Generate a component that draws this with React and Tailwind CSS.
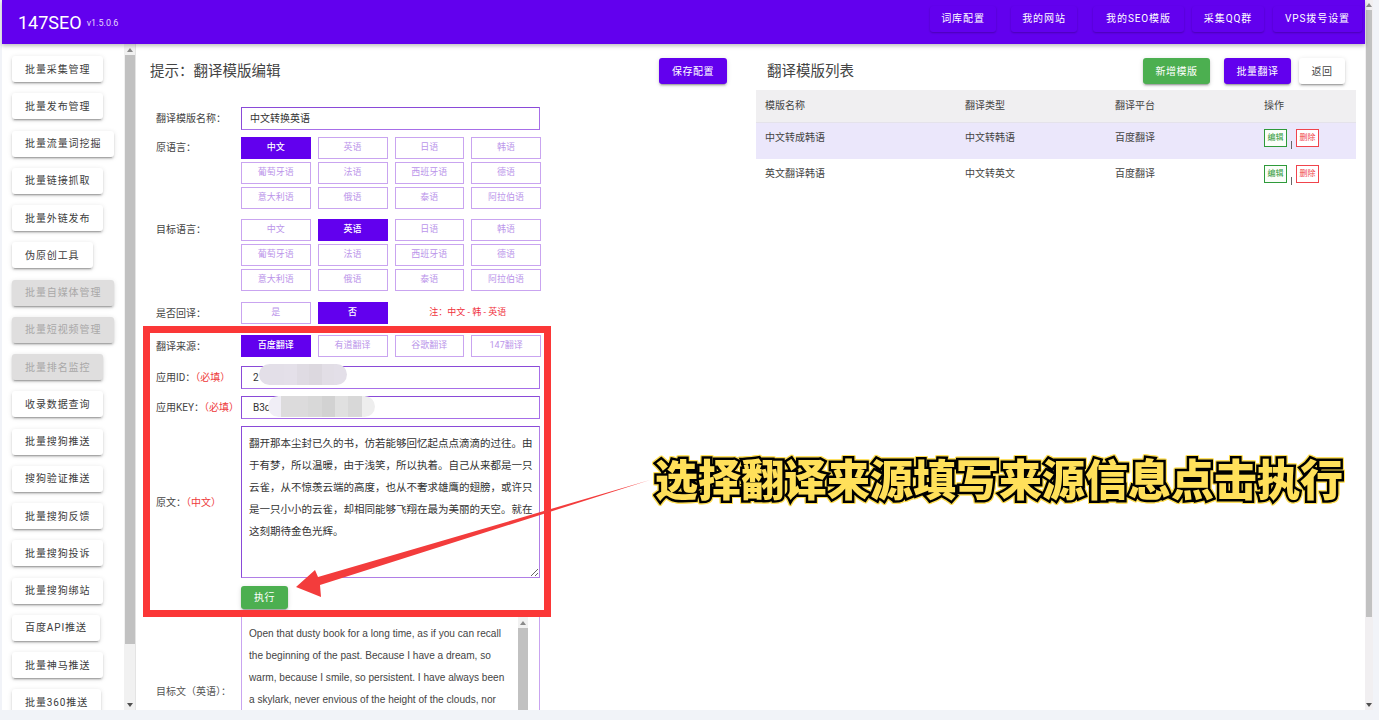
const font = `font-['Roboto','Noto_Sans_CJK_SC',sans-serif]`;

const raised =
  "shadow-[0_3px_1px_-2px_rgba(0,0,0,0.2),0_2px_2px_0_rgba(0,0,0,0.14),0_1px_5px_0_rgba(0,0,0,0.12)]";

const menu = [
  ["批量采集管理"],
  ["批量发布管理"],
  ["批量流量词挖掘"],
  ["批量链接抓取"],
  ["批量外链发布"],
  ["伪原创工具"],
  ["批量自媒体管理", true],
  ["批量短视频管理", true],
  ["批量排名监控", true],
  ["收录数据查询"],
  ["批量搜狗推送"],
  ["搜狗验证推送"],
  ["批量搜狗反馈"],
  ["批量搜狗投诉"],
  ["批量搜狗绑站"],
  ["百度API推送"],
  ["批量神马推送"],
  ["批量360推送"],
];

const nav = [
  { label: "词库配置", width: "w-[66px]", gap: "mr-[15px]" },
  { label: "我的网站", width: "w-[66px]", gap: "mr-[16px]" },
  { label: "我的SEO模版", width: "w-[91px]", gap: "mr-[8px]" },
  { label: "采集QQ群", width: "w-[72px]", gap: "mr-[9px]" },
  { label: "VPS拨号设置", width: "w-[89px]", gap: "" },
];

const languages = [
  "中文", "英语", "日语", "韩语",
  "葡萄牙语", "法语", "西班牙语", "德语",
  "意大利语", "俄语", "泰语", "阿拉伯语",
];

const sources = ["百度翻译", "有道翻译", "谷歌翻译", "147翻译"];

const templates = [
  { name: "中文转成韩语", type: "中文转韩语", platform: "百度翻译", active: true },
  { name: "英文翻译韩语", type: "中文转英文", platform: "百度翻译" },
];

const sourceText =
  "翻开那本尘封已久的书，仿若能够回忆起点点滴滴的过往。由于有梦，所以温暖，由于浅笑，所以执着。自己从来都是一只云雀，从不惊羡云端的高度，也从不奢求雄鹰的翅膀，或许只是一只小小的云雀，却相同能够飞翔在最为美丽的天空。就在这刻期待金色光辉。";

const targetText =
  "Open that dusty book for a long time, as if you can recall the beginning of the past. Because I have a dream, so warm, because I smile, so persistent. I have always been a skylark, never envious of the height of the clouds, nor";

const Option = ({ label, active }) => (
  <button
    className={
      active
        ? "h-[22px] bg-[#6200ee] text-white text-[9px] font-medium"
        : "h-[22px] bg-white border border-[#c9a4f0] text-[#bb95ea] text-[9px]"
    }
  >
    {label}
  </button>
);

const Label = ({ children, className = "" }) => (
  <div className={`w-[85px] shrink-0 text-[10px] text-[#444] whitespace-nowrap ${className}`}>
    {children}
  </div>
);

const TextInput = ({ value, inset = "px-[8px]" }) => (
  <div className={`w-[299px] h-[23px] flex items-center ${inset} text-[10px] text-[#333] bg-white border border-[#a76ee8] border-t-[#8a4ad8] border-l-[#8a4ad8]`}>
    {value}
  </div>
);

const Arrow = ({ up, className = "" }) => (
  <div
    className={`w-0 h-0 border-x-[3px] border-x-transparent ${
      up ? "border-b-[4px] border-b-[#8a8a8a]" : "border-t-[4px] border-t-[#505050]"
    } ${className}`}
  />
);

const Sidebar = () => (
  <aside className="w-[134px] shrink-0 flex h-full">
    <div className="w-[122px] shrink-0 overflow-hidden pt-[12px] pl-[10px] flex flex-col items-start gap-[11.25px]">
      {menu.map(([label, disabled]) => (
        <button
          key={label}
          className={`h-[26px] shrink-0 px-[13px] rounded-[3px] text-[10px] tracking-[0.9px] whitespace-nowrap ${raised} ${
            disabled ? "bg-[#dfdede] text-[#a9a8a8]" : "bg-white text-[#3c3c3c]"
          }`}
        >
          {label}
        </button>
      ))}
    </div>
    <div className="w-[12px] shrink-0 bg-[#f1f1f1] flex flex-col items-center border-r border-[#e4e4e4]">
      <Arrow up className="mt-[4px]" />
      <div className="w-[10px] h-[589px] mt-[3px] bg-[#c1c1c1]" />
      <Arrow className="mt-auto mb-[3px]" />
    </div>
  </aside>
);

const FormPanel = () => (
  <section className="w-[620px] shrink-0 h-full overflow-hidden pt-[14px]">
    <div className="flex items-center justify-between pl-[14px] pr-[29px] h-[26px]">
      <h2 className="pt-[1px] text-[14.5px] text-[#444] font-normal">提示：翻译模版编辑</h2>
      <button className={`w-[68px] h-[26px] rounded-[3px] bg-[#6200ee] text-white text-[10px] tracking-[0.5px] ${raised}`}>
        保存配置
      </button>
    </div>

    <div className="pl-[20px] mt-[23px]">
      <div className="flex items-center">
        <Label>翻译模版名称：</Label>
        <TextInput value="中文转换英语" />
      </div>

      <div className="flex mt-[7px]">
        <Label className="pt-[3px]">原语言：</Label>
        <div className="w-[300px] grid grid-cols-4 gap-x-[7px] gap-y-[3px]">
          {languages.map((item) => (
            <Option key={item} label={item} active={item === "中文"} />
          ))}
        </div>
      </div>

      <div className="flex mt-[10px]">
        <Label className="pt-[3px]">目标语言：</Label>
        <div className="w-[300px] grid grid-cols-4 gap-x-[7px] gap-y-[3px]">
          {languages.map((item) => (
            <Option key={item} label={item} active={item === "英语"} />
          ))}
        </div>
      </div>

      <div className="flex items-center mt-[11px]">
        <Label>是否回译：</Label>
        <div className="w-[300px] grid grid-cols-4 gap-x-[7px] items-center">
          <Option label="是" />
          <Option label="否" active />
          <div className="col-span-2 text-center text-[9px] text-[#f0323c] whitespace-nowrap">注：中文 - 韩 - 英语</div>
        </div>
      </div>

      <div className="flex items-center mt-[11px]">
        <Label>翻译来源：</Label>
        <div className="w-[300px] grid grid-cols-4 gap-x-[7px]">
          {sources.map((item, i) => (
            <Option key={item} label={item} active={i === 0} />
          ))}
        </div>
      </div>

      <div className="flex items-center mt-[9px]">
        <Label>
          应用ID：<span className="text-[#ee3a3a]">（必填）</span>
        </Label>
        <TextInput value="2" inset="px-[11px]" />
      </div>

      <div className="flex items-center mt-[7px]">
        <Label>
          应用KEY：<span className="text-[#ee3a3a]">（必填）</span>
        </Label>
        <TextInput value="B3c" inset="px-[11px]" />
      </div>

      <div className="flex items-center mt-[7px]">
        <Label>
          原文：<span className="text-[#ee3a3a]">（中文）</span>
        </Label>
        <textarea
          readOnly
          defaultValue={sourceText}
          className="block w-[299px] h-[152px] pl-[7px] pr-[4px] py-[6px] text-[10.5px] leading-[22px] text-[#333] bg-white border border-[#b07ee6] border-t-[#8a4ad8] border-l-[#8a4ad8] outline-none"
        />
      </div>

      <button className={`block ml-[85px] mt-[8px] w-[47px] h-[23px] rounded-[3px] bg-[#4caf50] text-white text-[10px] tracking-[0.5px] ${raised}`}>
        执行
      </button>

      <div className="flex items-center mt-[7px]">
        <Label className="text-[#555] -mt-[1px]">目标文（英语）：</Label>
        <div className="w-[299px] h-[152px] flex border border-[#c9a4f0] bg-white">
          <div className="flex-1 overflow-hidden px-[7px] py-[6px] font-['Liberation_Sans',sans-serif] text-[10.1px] leading-[22px] text-[#444]">
            {targetText}
          </div>
          <div className="w-[10px] mr-[11px] shrink-0 bg-[#f1f1f1] flex flex-col items-center">
            <Arrow up className="mt-[4px]" />
            <div className="w-full flex-1 mt-[3px] bg-[#c1c1c1]" />
          </div>
        </div>
      </div>
    </div>
  </section>
);

const ListPanel = () => (
  <section className="w-[600px] shrink-0 pt-[14px]">
    <div className="flex items-center h-[26px] pl-[11px]">
      <h2 className="pt-[1px] text-[14.5px] text-[#444] font-normal">翻译模版列表</h2>
      <button className={`ml-auto w-[67px] h-[26px] rounded-[3px] bg-[#4caf50] text-white text-[10px] tracking-[0.5px] ${raised}`}>
        新增模版
      </button>
      <button className={`ml-[14px] w-[67px] h-[26px] rounded-[3px] bg-[#6200ee] text-white text-[10px] tracking-[0.5px] ${raised}`}>
        批量翻译
      </button>
      <button className={`ml-[8px] mr-[11px] w-[46px] h-[26px] rounded-[3px] bg-white text-[#444] text-[10px] tracking-[0.5px] ${raised}`}>
        返回
      </button>
    </div>

    <table className="w-full mt-[6px] table-fixed text-[10px] text-[#444]">
      <thead>
        <tr className="h-[32px] bg-[#f0eff1] border-b border-[#e4e2ea] text-left">
          <th className="w-[200px] pl-[9px] font-normal">模版名称</th>
          <th className="w-[150px] pl-[9px] font-normal">翻译类型</th>
          <th className="w-[150px] pl-[9px] font-normal">翻译平台</th>
          <th className="pl-[8px] font-normal">操作</th>
        </tr>
      </thead>
      <tbody>
        {templates.map((row) => (
          <tr key={row.name} className={row.active ? "h-[37px] bg-[#ebe7fb]" : "h-[37px] bg-white"}>
            <td className="pl-[9px] align-top pt-[7px]">{row.name}</td>
            <td className="pl-[9px] align-top pt-[7px]">{row.type}</td>
            <td className="pl-[9px] align-top pt-[7px]">{row.platform}</td>
            <td className="pl-[8px] align-top pt-[6px]">
              <div className="flex items-end text-[8px]">
                <span className="w-[23px] h-[18px] flex items-center justify-center bg-[#fafdf9] border border-[#2e9a3a] text-[#2e9a3a]">
                  编辑
                </span>
                <span className="w-px h-[8px] mx-[4px] -mb-[2px] bg-[#666]" />
                <span className="w-[23px] h-[18px] flex items-center justify-center bg-white border border-[#f0444c] text-[#f0444c]">
                  删除
                </span>
              </div>
            </td>
          </tr>
        ))}
      </tbody>
    </table>
  </section>
);

const Mosaic = ({ className, cells }) => (
  <div className={`absolute flex h-[21px] rounded-full overflow-hidden ${className}`}>
    {cells.map((color, i) => (
      <div key={i} className="flex-1" style={{ backgroundColor: color }} />
    ))}
  </div>
);

const Annotations = () => (
  <>
    {/* 打码 */}
    <Mosaic
      className="left-[259px] top-[364px] w-[88px]"
      cells={["#e3dfe8", "#e3dfe8", "#e4e0e9", "#dfdbe3", "#dcd8df", "#e2dee6", "#e3dfe8"]}
    />
    <Mosaic
      className="left-[268px] top-[396px] w-[107px]"
      cells={["#f0eef6", "#dcdbdc", "#dcdbdc", "#d8d8d8", "#d2d2d2", "#e0e0e0", "#d8d8d8", "#eeeeee"]}
    />

    {/* 红框 */}
    <div className="absolute left-[143px] top-[326px] w-[408px] h-[291px] border-[7px] border-[#fb3737]" />

    <svg className="absolute left-0 top-0 pointer-events-none" width="1379" height="720">
      <polygon points="650,480 320,585 321,597 296,587 315,570 318,577 650,480" fill="#f33c3c" />
    </svg>

    <div className="absolute left-[655px] top-[451px] whitespace-nowrap text-[43px] leading-[60px] font-black text-[#ffe05a] [-webkit-text-stroke:5px_#000] [paint-order:stroke_fill] [filter:drop-shadow(1px_0_0_#ffdf55)_drop-shadow(-1px_0_0_#ffdf55)_drop-shadow(0_1px_0_#ffdf55)_drop-shadow(0_-1px_0_#ffdf55)]">
      选择翻译来源填写来源信息点击执行
    </div>
  </>
);

export default function App() {
  return (
    <div className={`relative h-[720px] overflow-hidden bg-[#f1f3f8] ${font}`}>
      <div className="flex h-full">
        <div className="w-[1365px] shrink-0 h-[710px] pl-[2px] flex flex-col">
          <header className="h-[44px] shrink-0 bg-[#6200ee] flex items-center pl-[16px] pr-[3px] shadow-[0_2px_4px_rgba(0,0,0,0.25)] relative z-10">
            <span className="text-white text-[18px]">147SEO</span>
            <span className="text-[#e4d6fb] text-[9px] ml-[5px] mt-[4px]">v1.5.0.6</span>
            <nav className="ml-auto flex -mt-[7px]">
              {nav.map((item) => (
                <button
                  key={item.label}
                  className={`h-[26px] ${item.width} ${item.gap} rounded-[3px] bg-[#6200ee] text-white text-[10px] tracking-[0.9px] whitespace-nowrap shadow-[0_1px_2px_rgba(0,0,0,0.25)]`}
                >
                  {item.label}
                </button>
              ))}
            </nav>
          </header>
          <div className="flex-1 min-h-0 flex bg-white">
            <Sidebar />
            <FormPanel />
            <ListPanel />
          </div>
        </div>
        <div className="w-[8px] shrink-0 h-[710px] bg-[#f1eff1] flex flex-col items-center">
          <Arrow up className="mt-[3px]" />
          <div className="w-[6px] h-[607px] mt-[3px] bg-[#c1c1c1]" />
          <Arrow className="mt-auto mb-[3px]" />
        </div>
      </div>
      <Annotations />
    </div>
  );
}
